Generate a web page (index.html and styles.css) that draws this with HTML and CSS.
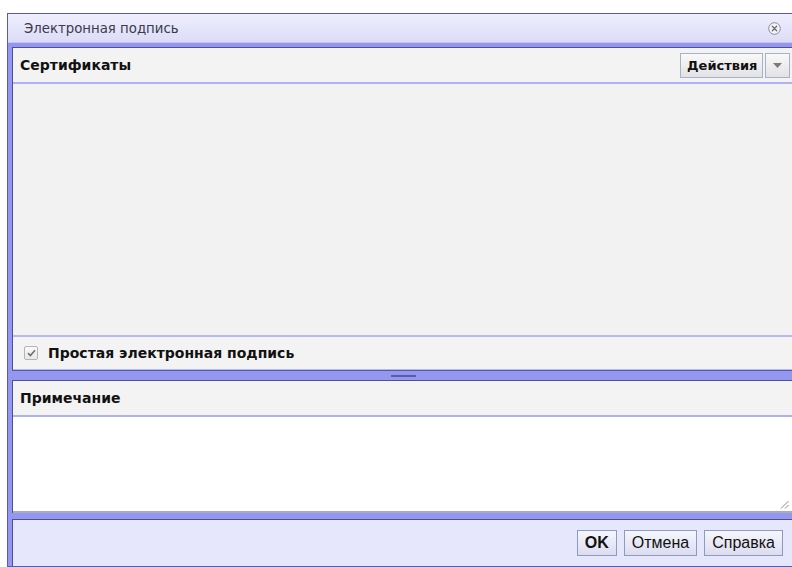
FILE: index.html
```html
<!DOCTYPE html>
<html lang="ru">
<head>
<meta charset="utf-8">
<title>Электронная подпись</title>
<link rel="stylesheet" href="styles.css">
</head>
<body>
<div class="dialog">
  <div class="titlebar">
    <span class="title">Электронная подпись</span>
    <span class="close" title="Закрыть">
      <svg width="13" height="13" viewBox="0 0 13 13">
        <circle cx="6.5" cy="6.5" r="5.8" fill="#f4f4f8" stroke="#8a8a96" stroke-width="1"/>
        <path d="M4.3 4.3 L8.7 8.7 M8.7 4.3 L4.3 8.7" stroke="#6a6a74" stroke-width="1.3" stroke-linecap="round"/>
      </svg>
    </span>
  </div>
  <div class="content">
    <div class="panel certs">
      <div class="panel-head">
        <span class="panel-title">Сертификаты</span>
        <div class="split-btn">
          <button class="btn-action">Действия</button>
          <button class="btn-arrow" aria-label="Меню">
            <svg width="9" height="5" viewBox="0 0 9 5"><path d="M0 0 H9 L4.5 5 Z" fill="#7a7a7a"/></svg>
          </button>
        </div>
      </div>
      <div class="cert-list"></div>
      <label class="simple-sign">
        <span class="checkbox">
          <svg width="9" height="8" viewBox="0 0 9 8"><path d="M1 4.2 L3.4 6.5 L8 1.2" fill="none" stroke="#6f6f6f" stroke-width="1.6"/></svg>
        </span>
        <span>Простая электронная подпись</span>
      </label>
    </div>
    <div class="splitter"><span class="grip"></span></div>
    <div class="panel note">
      <div class="panel-head">
        <span class="panel-title">Примечание</span>
      </div>
      <div class="note-area">
        <svg class="resize" width="9" height="9" viewBox="0 0 9 9"><path d="M8.5 1 L1 8.5 M8.5 5 L5 8.5" stroke="#8a8a8a" stroke-width="1"/></svg>
      </div>
    </div>
  </div>
  <div class="footer">
    <button class="btn btn-ok">OK</button>
    <button class="btn">Отмена</button>
    <button class="btn">Справка</button>
  </div>
</div>
</body>
</html>
```
FILE: styles.css
```css
html, body {
  margin: 0;
  padding: 0;
  background: #ffffff;
  overflow: hidden;
  height: 567px;
}

.dialog {
  margin: 13px 0 0 7px;
  width: 790px;
  border: 1px solid #5c5ca6;
  background: #9397ef;
  font-family: "DejaVu Sans", Tahoma, sans-serif;
}

.titlebar {
  height: 28px;
  display: flex;
  align-items: center;
  justify-content: space-between;
  padding: 0 17px 0 16px;
  background: linear-gradient(#eeeefd, #dcdcf7);
  border-bottom: 1px solid #c4c4ee;
}

.title {
  font-size: 13.3px;
  color: #3a3a4a;
}

.close {
  display: flex;
  width: 13px;
  height: 13px;
}

.content {
  padding: 4px 4px 0 4px;
}

.panel {
  border-left: 1px solid #4f4f98;
  border-top: 1px solid #4f4f98;
  background: #f2f2f2;
}

.panel-head {
  height: 34px;
  display: flex;
  align-items: center;
  justify-content: space-between;
  padding: 0 4px 0 7px;
  background: #f3f3f3;
  border-bottom: 2px solid #aeb1f3;
}

.panel-title {
  font-weight: bold;
  font-size: 14px;
  color: #111;
}

.split-btn {
  display: flex;
  gap: 2px;
  height: 25px;
}

.btn-action,
.btn-arrow {
  border: 1px solid #a6b2c6;
  background: linear-gradient(#f9f9f9, #e2e2e6);
  font-family: inherit;
  font-weight: bold;
  font-size: 13px;
  color: #111;
  margin: 0;
  padding: 0 6px;
}

.btn-action {
  width: 83px;
}

.btn-arrow {
  width: 25px;
  display: flex;
  align-items: center;
  justify-content: center;
  padding: 0;
}

.cert-list {
  height: 251px;
  background: #f2f2f2;
  border-bottom: 2px solid #b6b8f2;
}

.simple-sign {
  height: 32px;
  display: flex;
  align-items: center;
  gap: 10px;
  padding-left: 11px;
  font-weight: bold;
  font-size: 14px;
  color: #111;
  background: #f3f3f3;
  border-bottom: 1px solid #b6b8f2;
}

.checkbox {
  width: 12px;
  height: 12px;
  border: 1px solid #b4b4b4;
  border-radius: 2px;
  background: linear-gradient(#fafafa, #e8e8e8);
  display: flex;
  align-items: center;
  justify-content: center;
}

.splitter {
  height: 9px;
  border-top: 1px solid #5858a4;
  background: #9397ef;
  display: flex;
  align-items: center;
  justify-content: center;
}

.grip {
  width: 25px;
  height: 2px;
  background: #5b5ba8;
}

.note-area {
  position: relative;
  height: 94px;
  background: #ffffff;
  border-bottom: 2px solid #a6acbd;
  border-right: 1px solid #a6acbd;
}

.resize {
  position: absolute;
  right: 4px;
  bottom: 2px;
}

.footer {
  margin: 6px 4px 0 4px;
  border-top: 1px solid #4f4f98;
  border-left: 1px solid #4f4f98;
  height: 46px;
  background: #e6e6fc;
  display: flex;
  align-items: center;
  justify-content: flex-end;
  gap: 7px;
  padding-right: 11px;
}

.btn {
  height: 26px;
  border: 1px solid #8e9cbc;
  background: linear-gradient(#f6f6fd, #dcdcf0);
  font-family: "Liberation Sans", Arial, sans-serif;
  font-size: 16px;
  color: #111;
  padding: 0 7px;
  margin: 0;
}

.btn-ok {
  font-weight: bold;
}
```
